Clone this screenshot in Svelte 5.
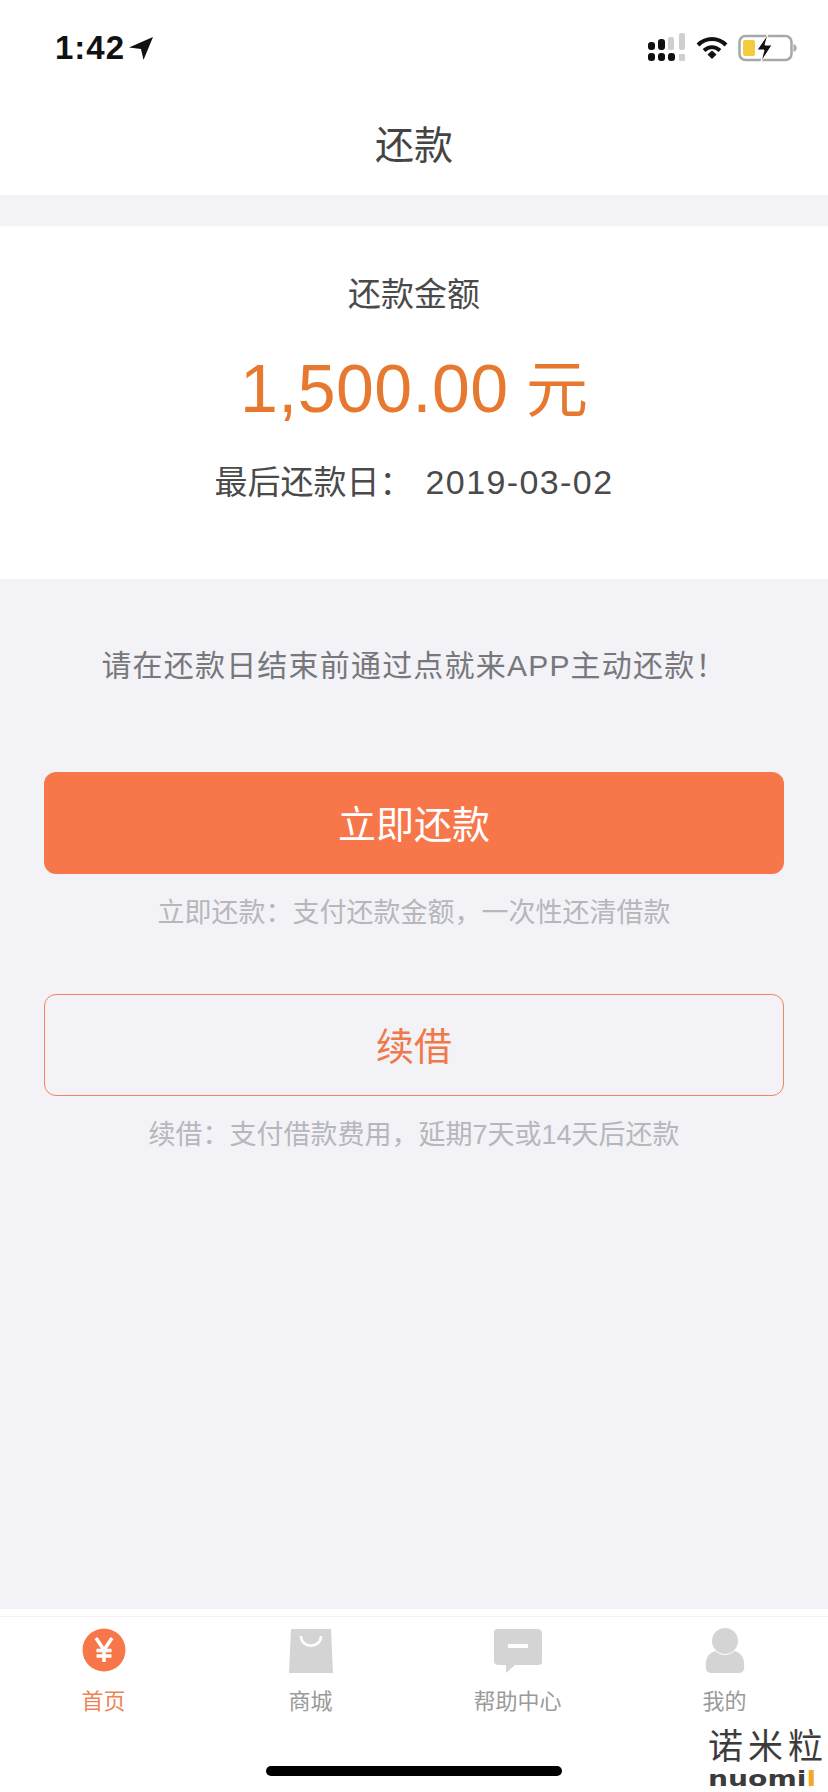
<script>
  const tabs = [
    { label: "首页", icon: "home", active: true },
    { label: "商城", icon: "shop" },
    { label: "帮助中心", icon: "help" },
    { label: "我的", icon: "me" }
  ];
</script>

<div class="page">
  <header class="top">
    <div class="status">
      <div class="clock">
        <span>1:42</span>
        <svg width="24" height="24" viewBox="0 0 24 24"><path d="M0 11.500 L24 1 L14.500 24 L12 13 Z" fill="#111" /></svg>
      </div>
      <div class="indicators">
        <svg width="38" height="30" viewBox="0 0 38 30">
          <g fill="#111">
            <rect x="0" y="9" width="7" height="8" rx="3" />
            <rect x="10" y="6" width="7" height="11" rx="3" />
            <rect x="0" y="20" width="7" height="8" rx="3" />
            <rect x="10" y="20" width="7" height="8" rx="3" />
            <rect x="20" y="20" width="7" height="8" rx="3" />
          </g>
          <g fill="#cfcfcf">
            <rect x="20" y="4" width="6" height="13" rx="2" />
            <rect x="31" y="0" width="6" height="17" rx="2" />
            <rect x="31" y="21" width="6" height="7" rx="1" />
          </g>
        </svg>
        <svg width="32" height="24" viewBox="0 0 32 24">
          <path d="M2 9 C10 1 22 1 30 9" fill="none" stroke="#111" stroke-width="4" />
          <path d="M8 14.500 C13 10 19 10 24 14.500" fill="none" stroke="#111" stroke-width="4" />
          <path d="M11.500 18.500 L16 14.500 L20.500 18.500 L16 23 Z" fill="#111" />
        </svg>
        <svg width="60" height="28" viewBox="0 0 60 28">
          <rect x="1.500" y="2" width="52" height="24" rx="6" fill="#fff" stroke="#a8a8a8" stroke-width="2.500" />
          <rect x="5" y="6" width="12" height="16" rx="2" fill="#f3cb3e" />
          <path d="M55.500 10 C58 11 58.500 12 58.500 14 C58.500 16 58 17 55.500 18 Z" fill="#a8a8a8" />
          <path d="M30 0 L19 16 L26 16 L23 28 L34 11 L27 11 Z" fill="#111" stroke="#fff" stroke-width="1" />
        </svg>
      </div>
    </div>
    <h1>还款</h1>
  </header>

  <section class="card">
    <p class="caption">还款金额</p>
    <p class="amount">1,500.00 <span>元</span></p>
    <p class="due"><span>最后还款日：</span><span class="date">2019-03-02</span></p>
  </section>

  <main class="body">
    <p class="notice">请在还款日结束前通过点就来APP主动还款！</p>
    <div class="btn solid">立即还款</div>
    <p class="hint">立即还款：支付还款金额，一次性还清借款</p>
    <div class="btn outline">续借</div>
    <p class="hint">续借：支付借款费用，延期7天或14天后还款</p>
  </main>

  <nav class="tabs">
    {#each tabs as tab}
      <div class="tab" class:active={tab.active}>
        <svg width="50" height="46" viewBox="0 0 50 46">
          {#if tab.icon === "home"}
            <circle cx="25" cy="23" r="21.500" fill="#f7774a" />
            <path d="M17 11 L25 23 L33 11 M25 23 L25 35 M17.500 23.500 H32.500 M17.500 29 H32.500" fill="none" stroke="#fff" stroke-width="3.500" />
          {:else if tab.icon === "shop"}
            <path d="M5 2 H45 L47 46 H3 Z" fill="#d4d4d4" />
            <path d="M15 9 C15 22 35 22 35 9" fill="none" stroke="#fff" stroke-width="2.500" />
          {:else if tab.icon === "help"}
            <path d="M4 2 H44 Q49 2 49 7 V35 Q49 38 45 38 H22 L13 46 L13 38 H6 Q1 38 1 34 V6 Q1 2 4 2 Z" fill="#d4d4d4" />
            <rect x="15" y="17" width="20" height="4" fill="#fff" />
          {:else}
            <circle cx="25" cy="14" r="13" fill="#d4d4d4" />
            <path d="M15 24 Q25 32 35 24 C43 27 45 33 44 42 Q43 46 39 46 H11 Q7 46 6 42 C5 33 7 27 15 24 Z" fill="#d4d4d4" />
          {/if}
        </svg>
        <span>{tab.label}</span>
      </div>
    {/each}
  </nav>

  <div class="home-bar"></div>

  <div class="logo">
    <div class="logo-cn">诺米粒</div>
    <div class="logo-en">nuomi<em>l</em></div>
  </div>
</div>

<style>
  :global(body) {
    margin: 0;
    background: #f2f2f7;
  }

  .page {
    position: relative;
    display: flex;
    flex-direction: column;
    width: 828px;
    height: 1792px;
    overflow: hidden;
    font-family: "Liberation Sans", "Noto Sans CJK SC", sans-serif;
    background: #f2f2f7;
  }

  p, h1 {
    margin: 0;
  }

  .top {
    height: 195px;
    background: #fff;
  }

  .status {
    display: flex;
    justify-content: space-between;
    align-items: center;
    height: 96px;
    padding: 0 30px 0 55px;
  }

  .clock {
    display: flex;
    align-items: center;
    gap: 4px;
    font-size: 33px;
    font-weight: 700;
    letter-spacing: 1px;
    color: #111;
  }

  .indicators {
    display: flex;
    align-items: center;
    gap: 10px;
  }

  h1 {
    margin-top: 22px;
    font-size: 39px;
    font-weight: 400;
    line-height: 56px;
    text-align: center;
    color: #444;
  }

  .card {
    height: 353px;
    margin-top: 31px;
    background: #fff;
    text-align: center;
  }

  .caption {
    padding-top: 44px;
    font-size: 33px;
    line-height: 50px;
    color: #4a4a4a;
  }

  .amount {
    margin-top: 28px;
    font-size: 68px;
    line-height: 80px;
    letter-spacing: 0.500px;
    color: #e6792f;
  }

  .amount span {
    margin-left: -2px;
    font-size: 62px;
    letter-spacing: 0;
  }

  .due {
    margin-top: 26px;
    font-size: 33px;
    line-height: 50px;
    color: #4a4a4a;
  }

  .date {
    margin-left: 13px;
    font-size: 34px;
    letter-spacing: 1.400px;
  }

  .body {
    flex: 1;
    padding: 0 44px;
    text-align: center;
  }

  .notice {
    margin-top: 62px;
    font-size: 30px;
    line-height: 50px;
    letter-spacing: 1.200px;
    color: #77777c;
  }

  .btn {
    display: flex;
    justify-content: center;
    align-items: center;
    box-sizing: border-box;
    height: 102px;
    padding-bottom: 4px;
    border-radius: 12px;
    font-size: 38px;
  }

  .solid {
    margin-top: 81px;
    background: #f7774a;
    color: #fff;
  }

  .outline {
    margin-top: 58px;
    border: 1.500px solid #f4845c;
    color: #f0794a;
  }

  .hint {
    margin-top: 16px;
    font-size: 27px;
    line-height: 46px;
    color: #b6b7bc;
  }

  .tabs {
    display: grid;
    grid-template-columns: repeat(4, 1fr);
    height: 175px;
    border-top: 1px solid #f3f3f3;
    box-shadow: 0 -7px 0 #fff;
    background: #fff;
  }

  .tab {
    display: flex;
    flex-direction: column;
    align-items: center;
    padding-top: 10px;
    font-size: 22px;
    color: #9a9a9a;
  }

  .tab span {
    margin-top: 13px;
    line-height: 32px;
  }

  .tab.active {
    color: #ee8358;
  }

  .home-bar {
    position: absolute;
    left: 266px;
    bottom: 16px;
    width: 296px;
    height: 10px;
    border-radius: 5px;
    background: #000;
  }

  .logo {
    position: absolute;
    right: 0;
    bottom: 2px;
    width: 120px;
    background: #fff;
  }

  .logo-cn {
    font-size: 35px;
    line-height: 42px;
    letter-spacing: 5px;
    white-space: nowrap;
    color: #3c3c3c;
  }

  .logo-en {
    font-family: "DejaVu Sans", sans-serif;
    font-size: 22px;
    font-weight: 700;
    line-height: 22px;
    white-space: nowrap;
    transform: scaleX(1.28);
    transform-origin: left center;
    color: #3c3c3c;
  }

  .logo-en em {
    font-style: normal;
    color: #f5a623;
  }
</style>
